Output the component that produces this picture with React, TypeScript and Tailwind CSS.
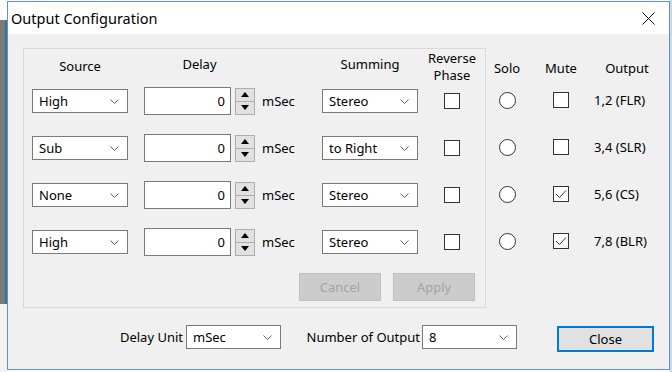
import React from "react";

const rows = [
  { source: "High", summing: "Stereo", out: "1,2 (FLR)", mute: false },
  { source: "Sub", summing: "to Right", out: "3,4 (SLR)", mute: false },
  { source: "None", summing: "Stereo", out: "5,6 (CS)", mute: true },
  { source: "High", summing: "Stereo", out: "7,8 (BLR)", mute: true },
];

function Chevron() {
  return (
    <svg width="9" height="5" viewBox="0 0 9 5" className="shrink-0">
      <polyline points="0.5,0.5 4.5,4.5 8.5,0.5" fill="none" stroke="#606060" strokeWidth="1" />
    </svg>
  );
}

function Combo({ value }: { value: string }) {
  return (
    <div className="w-[96px] h-[24px] bg-white border border-[#7a7a7a] flex items-center justify-between pl-[6px] pr-[8px]">
      <span>{value}</span>
      <Chevron />
    </div>
  );
}

function Spinner() {
  return (
    <div className="w-[20px] h-[27px] flex flex-col border border-[#adadad] bg-[#e1e1e1]">
      <div className="flex-1 flex items-center justify-center border-b border-[#adadad]">
        <svg width="8" height="5" viewBox="0 0 8 5">
          <polygon points="0,5 4,0 8,5" fill="#000" />
        </svg>
      </div>
      <div className="flex-1 flex items-center justify-center">
        <svg width="8" height="5" viewBox="0 0 8 5">
          <polygon points="0,0 8,0 4,5" fill="#000" />
        </svg>
      </div>
    </div>
  );
}

function Check({ checked }: { checked: boolean }) {
  return (
    <div className="w-[16px] h-[16px] bg-white border border-[#333333] flex items-center justify-center">
      {checked && (
        <svg width="12" height="10" viewBox="0 0 12 10">
          <polyline points="1,5 4.5,8.5 11,1.5" fill="none" stroke="#333" strokeWidth="1" />
        </svg>
      )}
    </div>
  );
}

function Radio() {
  return <div className="w-[17px] h-[17px] rounded-full bg-white border border-[#333333]" />;
}

export default function App() {
  return (
    <div className="w-[672px] h-[372px] bg-white flex overflow-hidden font-['Noto_Sans',sans-serif] text-[13px] text-black leading-[17px]">
      {/* window behind the dialog */}
      <div className="w-[7px] shrink-0 flex flex-col">
        <div className="h-[20px] bg-white" />
        <div className="flex-1 bg-[#7b7b7b] border-r-2 border-[#41729f]" />
        <div className="h-[68px] bg-[#f3f3f3]" />
      </div>

      {/* dialog */}
      <div className="mt-[1px] w-[663px] h-[369px] shrink-0 border border-[#5f93c7] bg-[#f0f0f0] flex flex-col">
        <div className="h-[32px] bg-white flex items-center justify-between pl-[3px] pr-[14px]">
          <span className="text-[14.5px]">Output Configuration</span>
          <svg width="13" height="13" viewBox="0 0 13 13">
            <path d="M0.5 0.5 L12.5 12.5 M12.5 0.5 L0.5 12.5" stroke="#111" strokeWidth="1" />
          </svg>
        </div>

        <div className="flex pl-[15px] pt-[14px]">
          {/* group box */}
          <div className="w-[463px] h-[260px] border border-[#d9d9d9] flex flex-col pl-[8px]">
            <div className="h-[35px] flex items-center">
              <div className="w-[96px] text-center">Source</div>
              <div className="w-[111px] ml-[16px] text-center pb-[4px]">Delay</div>
              <div className="w-[67px]" />
              <div className="w-[96px] text-center pb-[4px]">Summing</div>
              <div className="w-[50px] ml-[9px] text-center">
                Reverse
                <br />
                Phase
              </div>
            </div>
            <div className="flex flex-col gap-[13px]">
              {rows.map((r, i) => (
                <div key={i} className="h-[34px] flex items-center">
                  <Combo value={r.source} />
                  <div className="w-[111px] ml-[16px] flex items-center gap-[4px]">
                    <div className="w-[87px] h-[28px] bg-white border border-[#7a7a7a] flex items-center justify-end pr-[5px]">
                      0
                    </div>
                    <Spinner />
                  </div>
                  <div className="w-[67px] pl-[7px]">mSec</div>
                  <Combo value={r.summing} />
                  <div className="w-[50px] ml-[9px] flex justify-center">
                    <Check checked={false} />
                  </div>
                </div>
              ))}
            </div>
            <div className="mt-[14px] flex gap-[12px] pl-[267px]">
              <div className="w-[82px] h-[28px] bg-[#cccccc] border border-[#bfbfbf] flex items-center justify-center text-[#a3a3a3]">
                Cancel
              </div>
              <div className="w-[82px] h-[28px] bg-[#cccccc] border border-[#bfbfbf] flex items-center justify-center text-[#a3a3a3]">
                Apply
              </div>
            </div>
          </div>

          {/* solo / mute / output */}
          <div className="flex flex-col">
            <div className="h-[35px] grid grid-cols-[42px_66px_66px] items-center pt-[6px]">
              <div className="text-center">Solo</div>
              <div className="text-center">Mute</div>
              <div className="text-center">Output</div>
            </div>
            <div className="flex flex-col gap-[13px]">
              {rows.map((r, i) => (
                <div key={i} className="h-[34px] grid grid-cols-[42px_66px_66px] items-center">
                  <div className="flex justify-center">
                    <Radio />
                  </div>
                  <div className="flex justify-center">
                    <Check checked={r.mute} />
                  </div>
                  <div>{r.out}</div>
                </div>
              ))}
            </div>
          </div>
        </div>

        {/* bottom bar */}
        <div className="mt-[14px] flex items-center">
          <div className="w-[175px] text-right">Delay Unit</div>
          <div className="ml-[3px]">
            <div className="w-[95px] h-[24px] bg-white border border-[#7a7a7a] flex items-center justify-between pl-[6px] pr-[8px]">
              <span>mSec</span>
              <Chevron />
            </div>
          </div>
          <div className="w-[139px] text-right">Number of Output</div>
          <div className="ml-[2px]">
            <div className="w-[95px] h-[24px] bg-white border border-[#7a7a7a] flex items-center justify-between pl-[6px] pr-[8px]">
              <span>8</span>
              <Chevron />
            </div>
          </div>
          <div className="ml-[40px] mt-[4px] w-[97px] h-[26px] bg-[#e1e1e1] border-2 border-[#0078d7] flex items-center justify-center">
            Close
          </div>
        </div>
      </div>
      <div className="flex-1 bg-[#cfd8e0]" />
    </div>
  );
}
